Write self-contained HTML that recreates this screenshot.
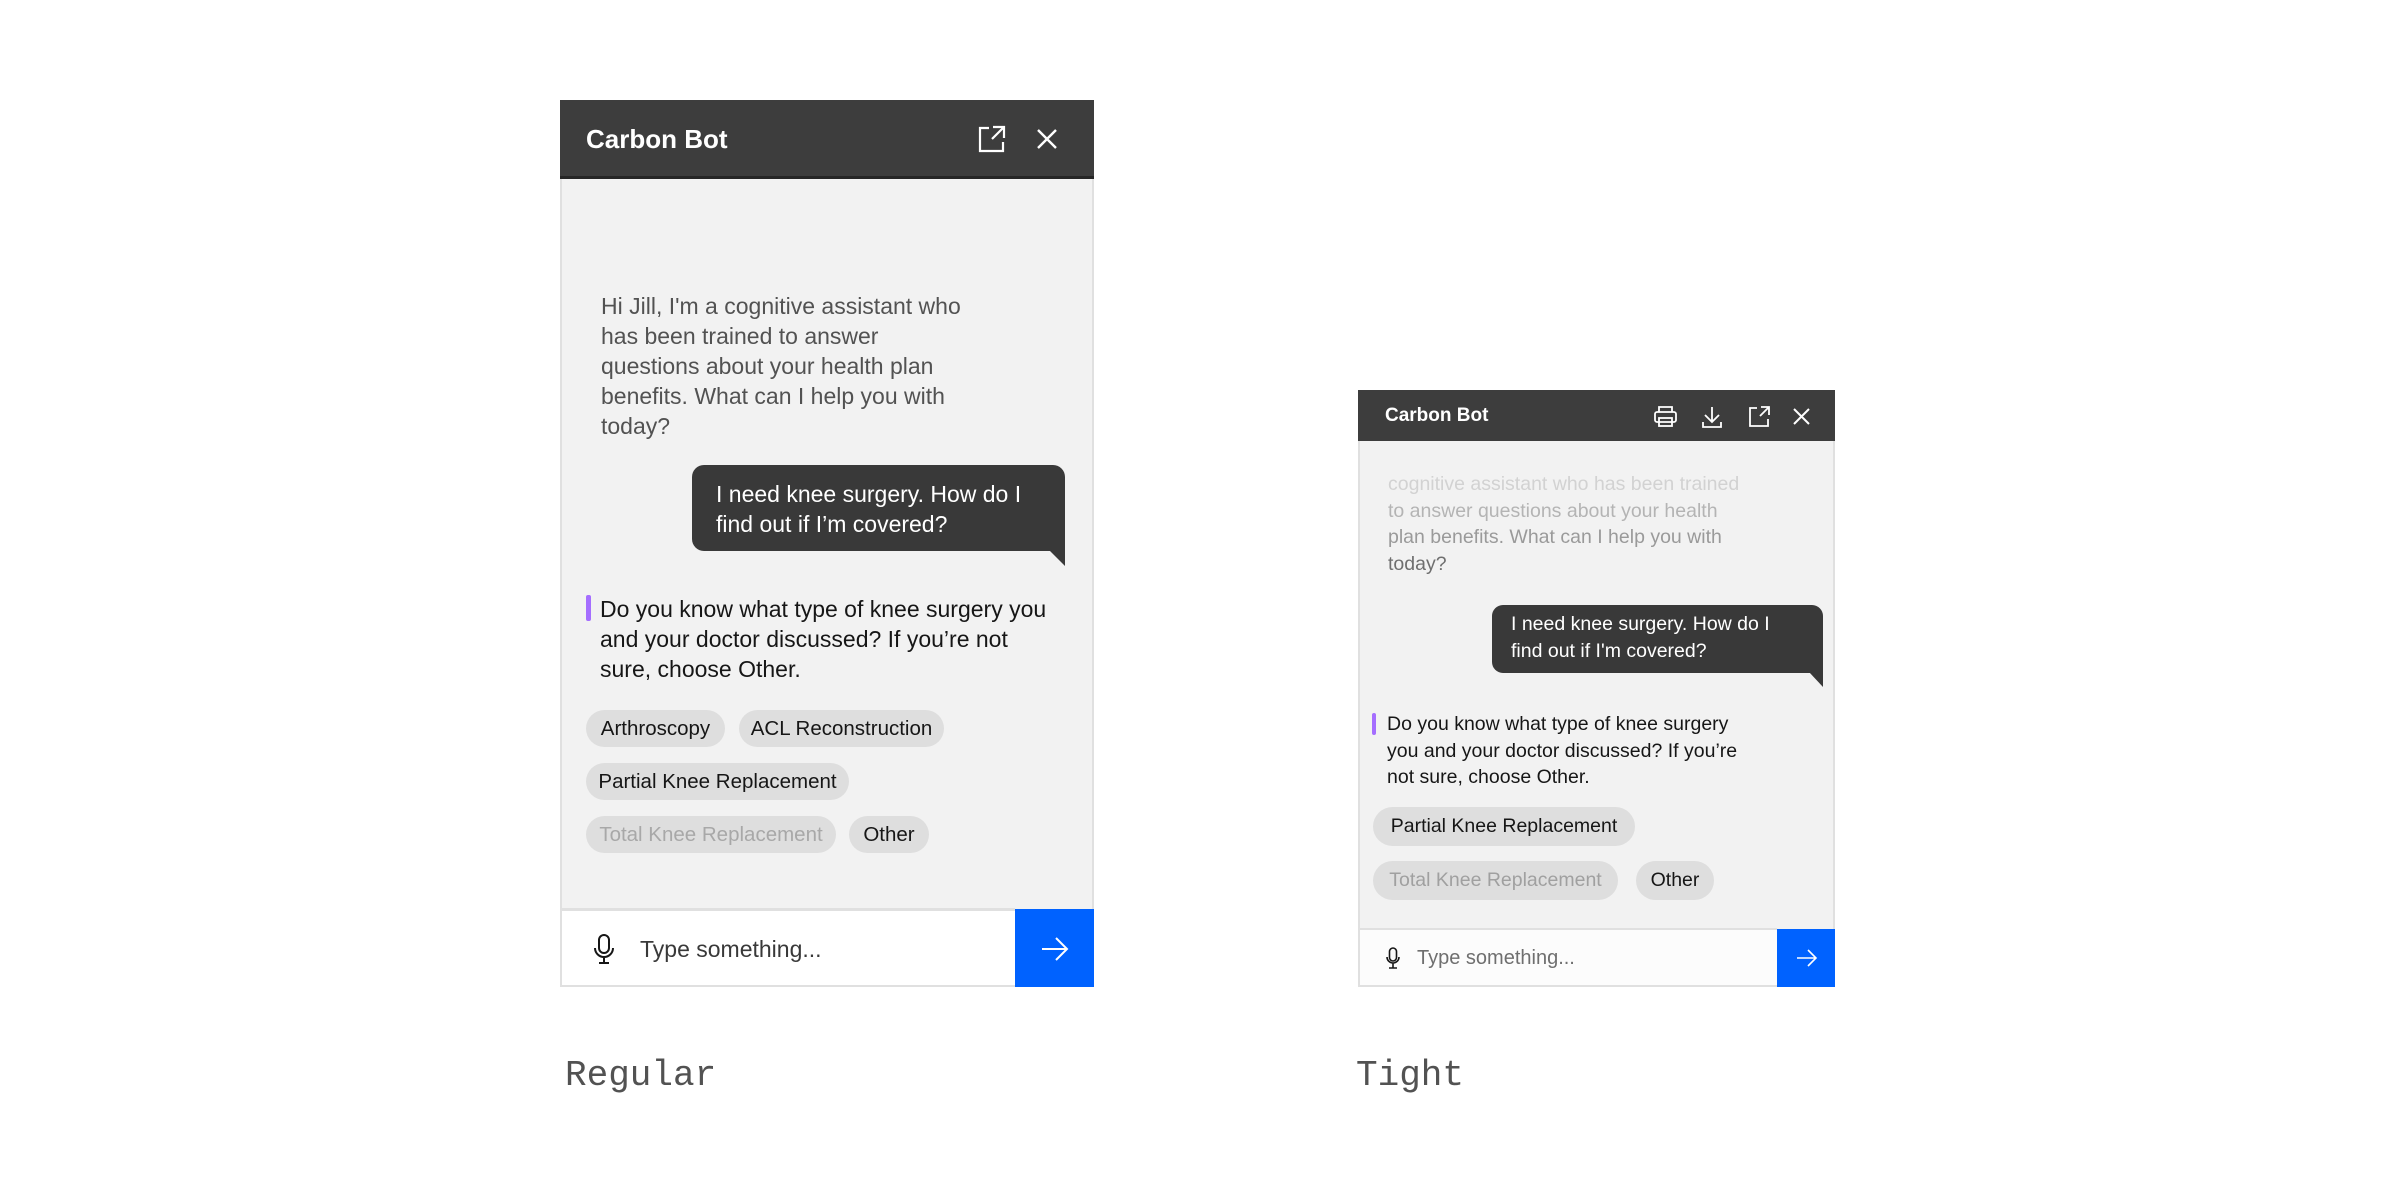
<!DOCTYPE html>
<html><head><meta charset="utf-8"><style>
*{margin:0;padding:0;box-sizing:border-box}
body{width:2400px;height:1200px;background:#fff;position:relative;overflow:hidden;font-family:"Liberation Sans",sans-serif}
.a{position:absolute}
.t{position:absolute;white-space:nowrap}
.chip{position:absolute;background:#dedede;border-radius:20px;color:#161616;display:flex;align-items:center;justify-content:center;white-space:nowrap}
svg{position:absolute;overflow:visible}
</style></head><body>

<!-- REGULAR -->
<div class="a" style="left:560px;top:100px;width:534px;height:887px;background:#f2f2f2;border:2px solid #e0e0e0"></div>
<div class="a" style="left:560px;top:100px;width:534px;height:79px;background:#3d3d3d;border-bottom:3px solid #262626"></div>
<div class="t" style="left:586px;top:123px;font-size:26px;font-weight:bold;color:#fff;line-height:32px">Carbon Bot</div>
<svg style="left:978px;top:125px" width="28" height="28" viewBox="0 0 28 28" fill="none" stroke="#fff" stroke-width="2.2"><path d="M11 3H2v23h23v-9"/><path d="M15 2h11v11M26 2L14 14"/></svg>
<svg style="left:1037px;top:129px" width="20" height="20" viewBox="0 0 20 20" stroke="#fff" stroke-width="2.4"><path d="M1 1l18 18M19 1L1 19"/></svg>

<div class="a" style="left:601px;top:291px;font-size:23px;line-height:30px;color:#525252">
<div>Hi Jill, I'm a cognitive assistant who</div><div>has been trained to answer</div><div>questions about your health plan</div><div>benefits. What can I help you with</div><div>today?</div></div>

<div class="a" style="left:692px;top:465px;width:373px;height:86px;background:#393939;border-radius:12px 12px 0 12px"></div>
<svg style="left:1049px;top:550px" width="16" height="16"><path d="M0 0H16V16Z" fill="#393939"/></svg>
<div class="a" style="left:716px;top:479px;font-size:23px;line-height:30px;color:#fff"><div>I need knee surgery. How do I</div><div>find out if I’m covered?</div></div>

<div class="a" style="left:586px;top:595px;width:5px;height:26px;background:#a56eff;border-radius:2px"></div>
<div class="a" style="left:600px;top:594px;font-size:23px;line-height:30px;color:#161616"><div>Do you know what type of knee surgery you</div><div>and your doctor discussed? If you’re not</div><div>sure, choose Other.</div></div>

<div class="chip" style="left:586px;top:710px;width:139px;height:37px;font-size:20.5px">Arthroscopy</div>
<div class="chip" style="left:739px;top:710px;width:205px;height:37px;font-size:20.5px">ACL Reconstruction</div>
<div class="chip" style="left:586px;top:763px;width:263px;height:37px;font-size:20.5px">Partial Knee Replacement</div>
<div class="chip" style="left:586px;top:816px;width:250px;height:37px;font-size:20.5px;color:#a8a8a8">Total Knee Replacement</div>
<div class="chip" style="left:849px;top:816px;width:80px;height:37px;font-size:20.5px">Other</div>

<div class="a" style="left:562px;top:908px;width:453px;height:77px;background:#fff;border-top:3px solid #e0e0e0"></div>
<div class="a" style="left:1015px;top:909px;width:79px;height:78px;background:#0062ff"></div>
<svg style="left:1041px;top:937px" width="28" height="24" viewBox="0 0 28 24" fill="none" stroke="#fff" stroke-width="2"><path d="M1 12h25M15 1l11 11-11 11"/></svg>
<svg style="left:594px;top:934px" width="20" height="30" viewBox="0 0 20 30" fill="none" stroke="#161616" stroke-width="2"><rect x="5" y="1" width="10" height="18" rx="5"/><path d="M1 14a9 9 0 0018 0M10 23v6M5 29h10"/></svg>
<div class="t" style="left:640px;top:934px;font-size:23px;line-height:30px;color:#393939">Type something...</div>

<div class="t" style="left:565px;top:1054px;font-family:'Liberation Mono',monospace;font-size:36px;line-height:44px;color:#525252">Regular</div>

<!-- TIGHT -->
<div class="a" style="left:1358px;top:390px;width:477px;height:597px;background:#f2f2f2;border:2px solid #e0e0e0"></div>
<div class="a" style="left:1358px;top:390px;width:477px;height:51px;background:#3d3d3d"></div>
<div class="t" style="left:1385px;top:404px;font-size:19px;font-weight:bold;color:#fff;line-height:24px">Carbon Bot</div>
<svg style="left:1654px;top:406px" width="23" height="21" viewBox="0 0 23 21" fill="none" stroke="#fff" stroke-width="1.8"><path d="M5 6V1h13v5"/><rect x="1" y="6" width="21" height="10" rx="2"/><rect x="5" y="12" width="13" height="8"/></svg>
<svg style="left:1702px;top:406px" width="20" height="22" viewBox="0 0 20 22" fill="none" stroke="#fff" stroke-width="1.8"><path d="M10 1v15M3 9l7 7 7-7M1 16v5h18v-5"/></svg>
<svg style="left:1749px;top:406px" width="21" height="21" viewBox="0 0 21 21" fill="none" stroke="#fff" stroke-width="1.8"><path d="M8 2H1v18h18v-7"/><path d="M12 1h8v8M20 1l-9 9"/></svg>
<svg style="left:1794px;top:409px" width="15" height="15" viewBox="0 0 15 15" stroke="#fff" stroke-width="2"><path d="M0 0l15 15M15 0L0 15"/></svg>

<div class="a" style="left:1388px;top:471px;font-size:19.5px;line-height:26.5px">
<div style="color:#d2d2d2">cognitive assistant who has been trained</div>
<div style="color:#b4b4b4">to answer questions about your health</div>
<div style="color:#9a9a9a">plan benefits. What can I help you with</div>
<div style="color:#6f6f6f">today?</div></div>

<div class="a" style="left:1492px;top:605px;width:331px;height:68px;background:#393939;border-radius:11px 11px 0 11px"></div>
<svg style="left:1809px;top:672px" width="14" height="15"><path d="M0 0H14V15Z" fill="#393939"/></svg>
<div class="a" style="left:1511px;top:611px;font-size:19.5px;line-height:26.5px;color:#fff"><div>I need knee surgery. How do I</div><div>find out if I'm covered?</div></div>

<div class="a" style="left:1372px;top:713px;width:4px;height:22px;background:#a56eff;border-radius:2px"></div>
<div class="a" style="left:1387px;top:711px;font-size:19.5px;line-height:26.5px;color:#161616"><div>Do you know what type of knee surgery</div><div>you and your doctor discussed? If you’re</div><div>not sure, choose Other.</div></div>

<div class="chip" style="left:1373px;top:807px;width:262px;height:39px;font-size:19.5px">Partial Knee Replacement</div>
<div class="chip" style="left:1373px;top:861px;width:245px;height:39px;font-size:19.5px;color:#a0a0a0">Total Knee Replacement</div>
<div class="chip" style="left:1636px;top:861px;width:78px;height:39px;font-size:19.5px">Other</div>

<div class="a" style="left:1360px;top:928px;width:417px;height:57px;background:#fcfcfc;border-top:2px solid #e0e0e0"></div>
<div class="a" style="left:1777px;top:929px;width:58px;height:58px;background:#0062ff"></div>
<svg style="left:1796px;top:949px" width="21" height="18" viewBox="0 0 21 18" fill="none" stroke="#fff" stroke-width="1.6"><path d="M1 9h19M12 1l8 8-8 8"/></svg>
<svg style="left:1386px;top:947px" width="14" height="22" viewBox="0 0 14 22" fill="none" stroke="#161616" stroke-width="1.6"><rect x="3.5" y="1" width="7" height="13" rx="3.5"/><path d="M1 10a6 6 0 0012 0M7 16v5M3 21h8"/></svg>
<div class="t" style="left:1417px;top:946px;font-size:20px;line-height:24px;color:#6f6f6f">Type something...</div>

<div class="t" style="left:1356px;top:1054px;font-family:'Liberation Mono',monospace;font-size:36px;line-height:44px;color:#525252">Tight</div>

</body></html>
